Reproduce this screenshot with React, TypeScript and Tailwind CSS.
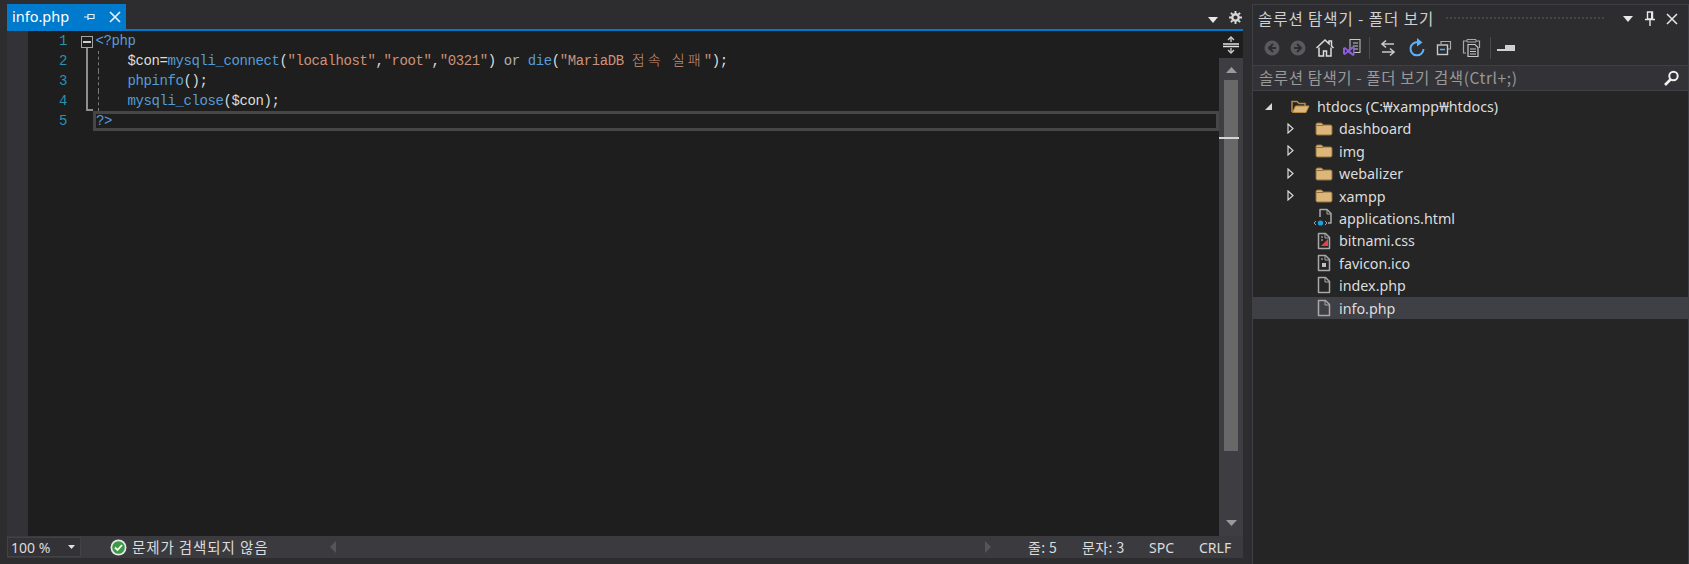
import type { ReactNode } from "react";

const uiFont = "font-['Noto_Sans','Noto_Sans_CJK_KR',sans-serif]";

function FileBase({ children }: { children?: ReactNode }) {
  return (
    <svg width="16" height="18" viewBox="0 0 16 18" fill="none">
      <path d="M2.500 1.500h7l4 4v11h-11z" stroke="#a8a8a8" strokeWidth="1.500" strokeLinejoin="round" />
      <path d="M9 1.500v4.500h4.500" stroke="#a8a8a8" strokeWidth="1" />
      {children}
    </svg>
  );
}

function HtmlFile() {
  return (
    <svg width="22" height="20" viewBox="0 0 22 20" fill="none">
      <path d="M7 9V1.500h7l4 4V15h-3" stroke="#a8a8a8" strokeWidth="1.500" strokeLinejoin="round" />
      <path d="M14 1.500V6h4" stroke="#a8a8a8" strokeWidth="1" />
      <circle cx="7.500" cy="15" r="2.600" fill="#1ba1e2" />
      <path d="M3 13l-2 2 2 2M12 13l2 2-2 2" stroke="#8aa4b4" strokeWidth="1" />
    </svg>
  );
}

function CssFile() {
  return (
    <FileBase>
      <path d="M5 14l7-7v7z" fill="#e8404a" />
      <path d="M5 5h2M5 8h2" stroke="#c8c8c8" strokeWidth="1" />
    </FileBase>
  );
}

function IcoFile() {
  return (
    <FileBase>
      <rect x="6" y="9" width="4" height="4" fill="#c0c0c0" />
      <path d="M5 5h2" stroke="#c8c8c8" strokeWidth="1" />
    </FileBase>
  );
}

function Folder() {
  return (
    <svg width="18" height="15" viewBox="0 0 18 15">
      <path d="M1 3.500A1.500 1.500 0 0 1 2.500 2h4l2 2h7A1.500 1.500 0 0 1 17 5.500v7a1.500 1.500 0 0 1-1.500 1.500h-13A1.500 1.500 0 0 1 1 12.500z" fill="#dcb67a" stroke="#8f7038" strokeWidth="1" />
      <path d="M1.500 4.500h7" stroke="#8f7038" strokeWidth="1" />
    </svg>
  );
}

function OpenFolder() {
  return (
    <svg width="19" height="15" viewBox="0 0 19 15" fill="none">
      <path d="M1 13V2.500h5l2 2h6V7" stroke="#b88a3e" strokeWidth="1.500" />
      <path d="M1.500 13.500l3-6.500H18l-3 6.500z" fill="#dcb67a" stroke="#b88a3e" strokeWidth="1" />
    </svg>
  );
}

function Expander({ open }: { open?: boolean }) {
  if (open) {
    return (
      <svg width="9" height="9" viewBox="0 0 9 9">
        <path d="M8 1v7H1z" fill="#d8d8d8" />
      </svg>
    );
  }
  return (
    <svg width="7" height="11" viewBox="0 0 7 11" fill="none">
      <path d="M1 1l5 4.500-5 4.500z" stroke="#d8d8d8" strokeWidth="1.200" />
    </svg>
  );
}

function TreeRow({ icon, label, expander, selected }: { icon: ReactNode; label: string; expander?: boolean; selected?: boolean }) {
  return (
    <div className={`flex h-[22.4px] items-center ${selected ? "bg-[#3f3f46]" : ""}`}>
      <div className="flex w-[41px] justify-end">{expander && <Expander />}</div>
      <div className="flex w-[44px] justify-end">
        <div className="mr-[2px] flex w-[24px] justify-center">{icon}</div>
      </div>
      <span className="pl-[1px] pt-[2px] text-[14.3px] leading-none text-[#dcdcdc]">{label}</span>
    </div>
  );
}

function Pun({ children }: { children: ReactNode }) {
  return <span className="text-[#dcdcdc]">{children}</span>;
}

function Fn({ children }: { children: ReactNode }) {
  return <span className="text-[#569cd6]">{children}</span>;
}

function Str({ children }: { children: ReactNode }) {
  return <span className="text-[#ce9178]">{children}</span>;
}

function Hangul({ children }: { children: ReactNode }) {
  return <span className="font-['Noto_Sans_CJK_KR',sans-serif] text-[14px] font-light leading-[0] tracking-[3.1px]">{children}</span>;
}

function CodeLine({ n, fold, guide, children }: { n: number; fold?: "box" | "line" | "end"; guide?: boolean; children?: ReactNode }) {
  return (
    <div className="flex h-5 items-center">
      <div className="w-[40px] pr-[1px] text-right text-[#2b91af]">{n}</div>
      <div className="relative h-5 w-[25px]">
        {fold === "box" && (
          <div className="absolute left-[13px] top-[5px] flex h-[12px] w-[12px] items-center justify-center border border-[#a5a5a5]">
            <div className="h-[2px] w-[8px] bg-[#d0d0d0]" />
          </div>
        )}
        {fold && fold !== "box" && <div className="absolute left-[18px] top-0 h-5 w-[2px] bg-[#8f8f8f]" />}
        {fold === "box" && <div className="absolute left-[18px] top-[17px] h-[3px] w-[2px] bg-[#8f8f8f]" />}
        {fold === "end" && <div className="absolute bottom-0 left-[18px] h-[2px] w-[7px] bg-[#8f8f8f]" />}
      </div>
      <div className="relative h-5 flex-1 whitespace-pre pl-[2.5px] leading-5">
        {guide && <div className="absolute left-[5px] top-0 h-5 border-l border-dashed border-[#7a7a7a]" />}
        {children}
      </div>
    </div>
  );
}

function Toolbar() {
  return (
    <div className="flex h-[31px] items-center pl-[9px]">
      <svg width="20" height="20" viewBox="0 0 20 20" className="mr-[6px] mt-[1px]">
        <circle cx="10" cy="10" r="7.500" fill="#5a5a5e" />
        <path d="M11 6l-4 4 4 4M7 10h7" stroke="#2d2d30" strokeWidth="2" fill="none" />
      </svg>
      <svg width="20" height="20" viewBox="0 0 20 20" className="mr-[7px] mt-[1px]">
        <circle cx="10" cy="10" r="7.500" fill="#5a5a5e" />
        <path d="M9 6l4 4-4 4M13 10H6" stroke="#2d2d30" strokeWidth="2" fill="none" />
      </svg>
      <svg width="20" height="20" viewBox="0 0 20 20" fill="none" className="mr-[7px]">
        <path d="M1.500 10L10 2l4 3.700V3h2.500v5L18.500 10" stroke="#dcdcdc" strokeWidth="1.500" />
        <path d="M4 9.500V18h4.500v-5h3v5H16V9.500" stroke="#dcdcdc" strokeWidth="1.500" />
      </svg>
      <svg width="20" height="20" viewBox="0 0 20 20" fill="none" className="mr-[7px]">
        <rect x="8" y="1.500" width="10" height="13" fill="#2d2d30" stroke="#c8c8c8" strokeWidth="1" />
        <path d="M11 5h5M11 8h5M11 11h5" stroke="#c8c8c8" strokeWidth="1" />
        <path d="M1 10l2-1 3 2.500L11 8l1.500 1v8L11 18l-5-3.500L3 17l-2-1z" fill="#8f5fd8" />
        <path d="M3 11v4l2-2zM11 10.500l-3 2.500 3 2.500z" fill="#2d2d30" />
      </svg>
      <div className="mr-[9px] h-[22px] w-px bg-[#4a4a4e]" />
      <svg width="18" height="18" viewBox="0 0 18 18" fill="none" className="mr-[11px]">
        <path d="M7 1.500L3 5l4 3.500M3 5h12M11 9.500L15 13l-4 3.500M15 13H3" stroke="#c8c8c8" strokeWidth="1.600" />
      </svg>
      <svg width="18" height="20" viewBox="0 0 18 20" fill="none" className="mr-[10px]">
        <path d="M10.500 4.500A6.500 6.500 0 1 0 15.500 11" stroke="#5db0f5" strokeWidth="2" />
        <path d="M9 0l5.500 4.500L9 8.500z" fill="#5db0f5" />
      </svg>
      <svg width="16" height="16" viewBox="0 0 16 16" fill="none" className="mr-[10px]">
        <path d="M5 4V1.500h9.500V9H12" stroke="#a8a8a8" strokeWidth="1.200" />
        <rect x="1.500" y="5" width="10" height="9.500" stroke="#c8c8c8" strokeWidth="1.400" />
        <path d="M4 9.500h5" stroke="#5db0f5" strokeWidth="1.500" />
      </svg>
      <svg width="19" height="20" viewBox="0 0 19 20" fill="none" className="mr-[9px]">
        <path d="M4 15H1.500V3H5M14 3h3.500v7" stroke="#a8a8a8" strokeWidth="1.200" />
        <path d="M5 1.500h9V4H5z" stroke="#a8a8a8" strokeWidth="1" />
        <path d="M6 6.500h7l3 3v9H6z" stroke="#c8c8c8" strokeWidth="1.200" />
        <path d="M8 11h6M8 13.500h6M8 16h6" stroke="#c8c8c8" strokeWidth="1" />
      </svg>
      <div className="mr-[8px] h-[22px] w-px bg-[#4a4a4e]" />
      <svg width="19" height="10" viewBox="0 0 19 10" className="-ml-[2px]">
        <rect x="0" y="6" width="8" height="2" fill="#d0d0d0" />
        <rect x="8" y="2" width="10" height="6" fill="#d0d0d0" />
      </svg>
    </div>
  );
}

export default function App() {
  return (
    <div className={`flex h-[564px] w-[1689px] overflow-hidden bg-[#2d2d30] pl-[7px] ${uiFont}`}>
      {/* editor side */}
      <div className="flex h-full w-[1236px] flex-col">
        <div className="flex h-[29px] items-end">
          <div className="flex h-[25px] w-[119px] items-center bg-[#007acc] pl-[5px] text-white">
            <span className="text-[14.5px] leading-none">info.php</span>
            <svg width="12" height="12" viewBox="0 0 12 12" className="ml-[15px]" fill="none">
              <path d="M0 6h4M4 3v6M4 3.500h6v4H4" stroke="#e8f2fa" strokeWidth="1.200" />
            </svg>
            <svg width="12" height="12" viewBox="0 0 12 12" className="ml-[13px]" fill="none">
              <path d="M1 1l10 10M11 1L1 11" stroke="#e8f2fa" strokeWidth="1.700" />
            </svg>
          </div>
          <div className="flex flex-1 items-center justify-end pb-[4px] pr-[1px]">
            <svg width="10" height="6" viewBox="0 0 10 6" className="mr-[11px] mt-[3px]">
              <path d="M0 0h10L5 6z" fill="#e8e8e8" />
            </svg>
            <svg width="13" height="13" viewBox="0 0 14 14" fill="none" className="mb-[1px]">
              <circle cx="7" cy="7" r="3.500" stroke="#d8d8d8" strokeWidth="2.500" />
              <path d="M7 0v3M7 11v3M0 7h3M11 7h3M2 2l2 2M10 10l2 2M12 2l-2 2M4 10l-2 2" stroke="#d8d8d8" strokeWidth="2" />
            </svg>
          </div>
        </div>
        <div className="h-[2px] bg-[#007acc]" />

        <div className="flex min-h-0 flex-1">
          <div className="w-[21px] bg-[#333337]" />
          <div className="flex-1 bg-[#1e1e1e] font-['Liberation_Mono',monospace] text-[14px] tracking-[-0.4px] text-[#dcdcdc]">
            <CodeLine n={1} fold="box">
              <Fn>{"<?php"}</Fn>
            </CodeLine>
            <CodeLine n={2} fold="line" guide>
              <span>{"    $con="}</span>
              <Fn>mysqli_connect</Fn>
              <Pun>(</Pun>
              <Str>"localhost"</Str>
              <Pun>,</Pun>
              <Str>"root"</Str>
              <Pun>,</Pun>
              <Str>"0321"</Str>
              <Pun>{") "}</Pun>
              <span className="text-[#b0b0b0]">or</span>
              <Pun> </Pun>
              <Fn>die</Fn>
              <Pun>(</Pun>
              <Str>
                "MariaDB <Hangul>접속</Hangul> <Hangul>실패</Hangul>"
              </Str>
              <Pun>);</Pun>
            </CodeLine>
            <CodeLine n={3} fold="line" guide>
              <span>{"    "}</span>
              <Fn>phpinfo</Fn>
              <Pun>();</Pun>
            </CodeLine>
            <CodeLine n={4} fold="end" guide>
              <span>{"    "}</span>
              <Fn>mysqli_close</Fn>
              <Pun>($con);</Pun>
            </CodeLine>
            <div className="flex h-5 items-center">
              <div className="w-[40px] pr-[1px] text-right text-[#2b91af]">5</div>
              <div className="w-[25px]" />
              <div className="h-5 flex-1 border-[3px] border-[#464646] leading-[14px]">
                <Fn>{"?>"}</Fn>
              </div>
            </div>
          </div>

          {/* scrollbar */}
          <div className="flex w-[24px] flex-col bg-[#3e3e42]">
            <div className="flex h-[27px] items-center justify-center bg-[#1e1e1e]">
              <svg width="16" height="18" viewBox="0 0 16 18" fill="none">
                <path d="M0 8h16M0 10.500h16" stroke="#e0e0e0" strokeWidth="1.300" />
                <path d="M8 1v5M8 12v5" stroke="#d0d0d0" strokeWidth="1.300" />
                <path d="M5 4l3-3 3 3M5 14l3 3 3-3" stroke="#d0d0d0" strokeWidth="1.300" />
              </svg>
            </div>
            <div className="flex h-[22px] items-center justify-center pt-[1px]">
              <svg width="11" height="6" viewBox="0 0 11 6">
                <path d="M5.500 0L11 6H0z" fill="#9a9a9a" />
              </svg>
            </div>
            <div className="relative mx-[5px] h-[371px] bg-[#686868]">
              <div className="absolute -left-[5px] -right-[1px] top-[57px] h-[2px] bg-[#d4d4d4]" />
            </div>
            <div className="flex-1" />
            <div className="flex h-[20px] items-start justify-center pt-[4px]">
              <svg width="11" height="6" viewBox="0 0 11 6">
                <path d="M0 0h11L5.500 6z" fill="#9a9a9a" />
              </svg>
            </div>
          </div>
        </div>

        {/* status bar */}
        <div className="mb-[6px] flex h-[22px] items-center bg-[#3a3a3f] text-[14px] text-[#dcdcdc]">
          <div className="flex h-[20px] w-[74px] items-center justify-between border border-[#434346] bg-[#333337] pl-[3px] pr-[5px]">
            <span>100 %</span>
            <svg width="7" height="4" viewBox="0 0 7 4">
              <path d="M0 0h7L3.500 4z" fill="#e0e0e0" />
            </svg>
          </div>
          <svg width="17" height="17" viewBox="0 0 17 17" className="ml-[29px]">
            <circle cx="8.500" cy="8.500" r="8" fill="#e8e8e8" />
            <circle cx="8.500" cy="8.500" r="6.300" fill="#3c9a45" />
            <path d="M5 8.500l2.500 2.500L12 6" stroke="#fff" strokeWidth="1.800" fill="none" />
          </svg>
          <span className="ml-[5px] font-['Noto_Sans_CJK_KR',sans-serif] text-[14.5px] tracking-[0.9px]">문제가 검색되지 않음</span>
          <svg width="6" height="12" viewBox="0 0 6 12" className="ml-[62px]">
            <path d="M6 0v12L0 6z" fill="#55555a" />
          </svg>
          <div className="flex-1" />
          <svg width="6" height="12" viewBox="0 0 6 12" className="mr-[37px]">
            <path d="M0 0v12l6-6z" fill="#55555a" />
          </svg>
          <span className="w-[54px] font-['Noto_Sans_CJK_KR',sans-serif] tracking-[0.4px]">줄: 5</span>
          <span className="w-[67px] font-['Noto_Sans_CJK_KR',sans-serif] tracking-[0.4px]">문자: 3</span>
          <span className="w-[50px]">SPC</span>
          <span className="w-[44px]">CRLF</span>
        </div>
      </div>

      {/* solution explorer */}
      <div className="ml-[9px] mt-[4px] flex flex-1 flex-col border-l border-r border-t border-[#3f3f46]">
        <div className="flex h-[27px] items-center pl-[5px] text-[#d0d0d0]">
          <span className="font-['Noto_Sans_CJK_KR',sans-serif] text-[15.5px] tracking-[0.95px]">솔루션 탐색기 - 폴더 보기</span>
          <div className="mx-[11px] h-[5px] flex-1 bg-[radial-gradient(#46464a_1px,transparent_1px)] bg-[length:4px_4px]" />
          <div className="flex items-center pr-[10px]">
            <svg width="10" height="6" viewBox="0 0 10 6" className="ml-[8px] mr-[12px]">
              <path d="M0 0h10L5 6z" fill="#e8e8e8" />
            </svg>
            <svg width="10" height="15" viewBox="0 0 10 15" fill="none" className="mr-[11px]">
              <path d="M2.500 1h5v7h-5zM0 8.500h10M5 9v6" stroke="#e8e8e8" strokeWidth="1.400" />
              <path d="M6 1h2v7H6z" fill="#e8e8e8" />
            </svg>
            <svg width="12" height="12" viewBox="0 0 12 12" fill="none">
              <path d="M1 1l10 10M11 1L1 11" stroke="#e8e8e8" strokeWidth="1.500" />
            </svg>
          </div>
        </div>
        <Toolbar />
        <div className="mt-[2px] flex h-[26px] items-center justify-between border-y border-[#3f3f46] bg-[#333337] pl-[6px] pr-[8px]">
          <span className="font-['Noto_Sans_CJK_KR',sans-serif] text-[15.5px] tracking-[0.6px] text-[#999999]">솔루션 탐색기 - 폴더 보기 검색(Ctrl+;)</span>
          <svg width="17" height="17" viewBox="0 0 17 17" fill="none">
            <circle cx="10.500" cy="6" r="4.200" stroke="#f0f0f0" strokeWidth="2" />
            <path d="M7.500 9.500L2 15" stroke="#f0f0f0" strokeWidth="2.600" />
          </svg>
        </div>
        <div className="flex-1 bg-[#252526] pt-[4px]">
          <div className="flex h-[22.4px] items-center">
            <div className="flex w-[20px] justify-end">
              <Expander open />
            </div>
            <div className="flex w-[37px] justify-end">
              <OpenFolder />
            </div>
            <span className="pl-[7px] pt-[2px] text-[14.3px] leading-none text-[#dcdcdc]">htdocs (C:₩xampp₩htdocs)</span>
          </div>
          <TreeRow icon={<Folder />} label="dashboard" expander />
          <TreeRow icon={<Folder />} label="img" expander />
          <TreeRow icon={<Folder />} label="webalizer" expander />
          <TreeRow icon={<Folder />} label="xampp" expander />
          <TreeRow icon={<HtmlFile />} label="applications.html" />
          <TreeRow icon={<CssFile />} label="bitnami.css" />
          <TreeRow icon={<IcoFile />} label="favicon.ico" />
          <TreeRow icon={<FileBase />} label="index.php" />
          <TreeRow icon={<FileBase />} label="info.php" selected />
        </div>
      </div>
    </div>
  );
}
